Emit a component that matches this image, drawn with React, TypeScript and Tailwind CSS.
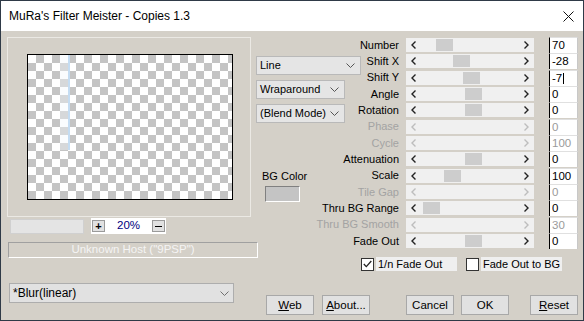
import React from 'react';

const font = "font-['Liberation_Sans',Arial,sans-serif]";

type Row = {
  label: string;
  value: string;
  thumb?: number;
  disabled?: boolean;
  caret?: boolean;
};

const rows: Row[] = [
  { label: 'Number', value: '70', thumb: 30 },
  { label: 'Shift X', value: '-28', thumb: 47 },
  { label: 'Shift Y', value: '-7', thumb: 57, caret: true },
  { label: 'Angle', value: '0', thumb: 59 },
  { label: 'Rotation', value: '0', thumb: 59 },
  { label: 'Phase', value: '0', disabled: true },
  { label: 'Cycle', value: '100', disabled: true },
  { label: 'Attenuation', value: '0', thumb: 59 },
  { label: 'Scale', value: '100', thumb: 38 },
  { label: 'Tile Gap', value: '0', disabled: true },
  { label: 'Thru BG Range', value: '0', thumb: 17 },
  { label: 'Thru BG Smooth', value: '30', disabled: true },
  { label: 'Fade Out', value: '0', thumb: 59 },
];

const Chevron = ({ color = '#555' }: { color?: string }) => (
  <svg width="9" height="5" viewBox="0 0 9 5" className="shrink-0">
    <path d="M0.5 0.5 L4.5 4.5 L8.5 0.5" fill="none" stroke={color} strokeWidth="1" />
  </svg>
);

const Arrow = ({ dir, color }: { dir: 'l' | 'r'; color: string }) => (
  <svg width="5" height="8" viewBox="0 0 5 8" className="shrink-0">
    <path
      d={dir === 'l' ? 'M4.5 0.5 L1 4 L4.5 7.5' : 'M0.5 0.5 L4 4 L0.5 7.5'}
      fill="none"
      stroke={color}
      strokeWidth="1.4"
    />
  </svg>
);

const Dropdown = ({ text, width }: { text: string; width: string }) => (
  <div
    className={`${width} h-[19px] shrink-0 flex items-center justify-between pl-[3px] pr-[5px] bg-[#e5e5e5] border border-[#b9b9b9] text-[11px] text-black whitespace-nowrap`}
  >
    <span>{text}</span>
    <Chevron />
  </div>
);

const SliderRow = ({ row }: { row: Row }) => {
  const arrow = row.disabled ? '#bdbdbd' : '#222';
  return (
    <div className="flex items-center h-[16.33px]">
      <div
        className={`w-[85px] pr-[2px] text-right text-[11px] leading-none whitespace-nowrap ${
          row.disabled ? 'text-[#a3a3a3]' : 'text-black'
        }`}
      >
        {row.label}
      </div>
      <div className="relative ml-[5px] w-[128px] h-[14px] bg-[#f0f0f0] flex items-center justify-between px-[5px]">
        <Arrow dir="l" color={arrow} />
        {row.thumb !== undefined && (
          <div
            className="absolute top-[1px] h-[12px] w-[17px] bg-[#cdcdcd]"
            style={{ left: row.thumb }}
          />
        )}
        <Arrow dir="r" color={arrow} />
      </div>
      <div
        className={`ml-[15px] w-[29px] h-[16px] bg-white border-l border-t border-l-black border-t-[#e0e0e0] border-r border-r-[#c8c8c8] pl-[2px] flex items-center text-[11.5px] leading-none ${
          row.disabled ? 'text-[#9a9a9a]' : 'text-black'
        }`}
      >
        {row.value}
        {row.caret && <span className="ml-[1px] w-px h-[11px] bg-black" />}
      </div>
    </div>
  );
};

const Button = ({ children, ml }: { children: React.ReactNode; ml: string }) => (
  <div
    className={`${ml} w-[48px] h-[20px] bg-[#e1e1e1] border border-[#a8a8a8] flex items-center justify-center text-[11.5px] text-black`}
  >
    {children}
  </div>
);

const Checkbox = ({ checked, label, ml }: { checked: boolean; label: string; ml: string }) => (
  <div className={`${ml} flex items-center`}>
    <div className="w-[13px] h-[13px] bg-white border border-[#333] flex items-center justify-center">
      {checked && (
        <svg width="9" height="8" viewBox="0 0 9 8">
          <path d="M0.8 4 L3.3 6.6 L8.3 1" fill="none" stroke="#222" strokeWidth="1.3" />
        </svg>
      )}
    </div>
    <div className="ml-[2px] w-[81px] h-[14px] bg-[#efefef] pl-[2px] flex items-center text-[11px] text-black whitespace-nowrap">
      {label}
    </div>
  </div>
);

export default function App() {
  return (
    <div
      className={`${font} w-[584px] h-[321px] border border-[#2f3a47] bg-[#d4d0c8] flex flex-col overflow-hidden`}
    >
      {/* title bar */}
      <div className="h-[30px] bg-white flex items-center justify-between pl-[8px] pr-[9px] shrink-0">
        <span className="text-[12px] text-black">MuRa's Filter Meister - Copies 1.3</span>
        <svg width="11" height="11" viewBox="0 0 11 11">
          <path d="M0.5 0.5 L10.5 10.5 M10.5 0.5 L0.5 10.5" stroke="#111" strokeWidth="1" />
        </svg>
      </div>

      <div className="flex flex-1">
        {/* left column */}
        <div className="w-[249px] ml-[6px] flex flex-col shrink-0">
          <div className="mt-[6px] w-[244px] h-[180px] border border-[#ebe9e4] pl-[19px] pt-[16px]">
            <div className="relative w-[206px] h-[146px] border border-black bg-[repeating-conic-gradient(#c4c4c4_0_25%,#ffffff_0_50%)] bg-[length:16px_16px]">
              <div className="absolute left-[32px] top-0 w-[8px] h-[95px] bg-[#f2f7fd]/40" />
              <div className="absolute left-[40px] top-0 w-[2px] h-[95px] bg-[#c4dcf2]" />
            </div>
          </div>
          <div className="mt-[1px] flex items-center h-[16px]">
            <div className="ml-[3px] w-[74px] h-[15px] bg-[#e4e4e4] border border-[#d0d0d0]" />
            <div className="ml-[7px] w-[75px] h-[16px] bg-white flex items-center justify-between px-[1px]">
              <div className="w-[13px] h-[12px] bg-[#e1e1e1] border border-[#9a9a9a] flex items-center justify-center text-[11px] font-bold leading-none">
                +
              </div>
              <span className="text-[11.5px] text-[#000080]">20%</span>
              <div className="w-[13px] h-[12px] bg-[#e1e1e1] border border-[#9a9a9a] flex items-center justify-center">
                <div className="w-[7px] h-px bg-black" />
              </div>
            </div>
          </div>
          <div className="mt-[8px] ml-[1px] w-[250px] h-[16px] border-t border-l border-[#a0a0a0] border-b border-r border-b-white border-r-white flex items-center justify-center text-[11.5px] leading-none text-[#f4f4f4] whitespace-nowrap">
            Unknown Host ("9PSP")
          </div>
          <div className="mt-[25px] ml-[2px] w-[225px] h-[20px] bg-[#e1e1e1] border border-[#adadad] flex items-center justify-between pl-[3px] pr-[4px] text-[12px] text-black">
            <span>*Blur(linear)</span>
            <Chevron color="#707070" />
          </div>
        </div>

        {/* right part */}
        <div className="flex flex-col flex-1">
          <div className="flex">
            <div className="w-[60px] shrink-0 pt-[25px] flex flex-col">
              <Dropdown text="Line" width="w-[105px]" />
              <div className="mt-[5px]">
                <Dropdown text="Wraparound" width="w-[89px]" />
              </div>
              <div className="mt-[5px]">
                <Dropdown text="(Blend Mode)" width="w-[89px]" />
              </div>
              <div className="mt-[47px] ml-[6px] text-[11px] leading-[12px] text-black whitespace-nowrap">
                BG Color
              </div>
              <div className="mt-[4px] ml-[9px] w-[35px] h-[16px] bg-[#c4c4c4] border border-t-[#808080] border-l-[#808080] border-b-white border-r-white" />
            </div>
            <div className="pt-[6px] flex flex-col">
              {rows.map((r) => (
                <SliderRow key={r.label} row={r} />
              ))}
            </div>
          </div>

          <div className="mt-[8px] flex items-center h-[14px]">
            <Checkbox checked label="1/n Fade Out" ml="ml-[105px]" />
            <Checkbox checked={false} label="Fade Out to BG" ml="ml-[9px]" />
          </div>

          <div className="mt-[24px] flex items-center">
            <Button ml="ml-[10px]">
              <span>
                <u>W</u>eb
              </span>
            </Button>
            <Button ml="ml-[8px]">
              <span>
                <u>A</u>bout...
              </span>
            </Button>
            <Button ml="ml-[36px]">Cancel</Button>
            <Button ml="ml-[7px]">OK</Button>
            <Button ml="ml-[21px]">
              <span>
                <u>R</u>eset
              </span>
            </Button>
          </div>
        </div>
      </div>
    </div>
  );
}
